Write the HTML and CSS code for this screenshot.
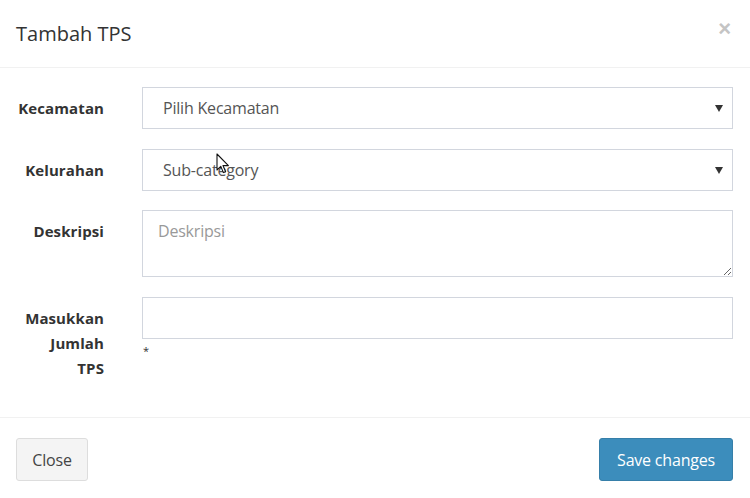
FILE: index.html
```html
<!DOCTYPE html>
<html>
<head>
<meta charset="utf-8">
<link rel="stylesheet" href="styles.css">
</head>
<body>
<div class="modal">
  <div class="modal-header">
    <h4 class="modal-title">Tambah TPS</h4>
    <button class="close" type="button">×</button>
  </div>
  <div class="modal-body">
    <div class="form-row">
      <label class="form-label">Kecamatan</label>
      <div class="select-wrap">
        <select class="form-control"><option>Pilih Kecamatan</option></select>
        <span class="caret"></span>
      </div>
    </div>
    <div class="form-row tight">
      <label class="form-label">Kelurahan</label>
      <div class="select-wrap">
        <select class="form-control"><option>Sub-category</option></select>
        <span class="caret"></span>
        <svg class="cursor" width="14" height="22" viewBox="0 0 14 22">
          <path d="M1 1 L1 17 L4.8 13.4 L7.4 19.6 L9.6 18.7 L7 12.6 L12.4 12.6 Z" fill="#fff" stroke="#111" stroke-width="1.1" stroke-linejoin="round"/>
        </svg>
      </div>
    </div>
    <div class="form-row">
      <label class="form-label">Deskripsi</label>
      <textarea class="form-control textarea" placeholder="Deskripsi"></textarea>
    </div>
    <div class="form-row last">
      <label class="form-label">Masukkan<br>Jumlah<br>TPS</label>
      <div>
        <input class="form-control" type="text">
        <div class="required">*</div>
      </div>
    </div>
  </div>
  <div class="modal-footer">
    <button class="btn btn-default" type="button">Close</button>
    <button class="btn btn-primary" type="button">Save changes</button>
  </div>
</div>
</body>
</html>
```

FILE: styles.css
```css
* { box-sizing: border-box; }
html, body { margin: 0; padding: 0; background: #fff; }
body {
  font-family: "Open Sans", "Liberation Sans", sans-serif;
  color: #333;
  width: 750px;
  height: 498px;
  overflow: hidden;
}
.modal { width: 750px; }
.modal-header {
  height: 68px;
  padding: 0 17px 0 16px;
  border-bottom: 1px solid #f1f1f1;
  display: flex;
  align-items: center;
  justify-content: space-between;
}
.modal-title {
  margin: 0;
  font-size: 20px;
  font-weight: 400;
  color: #333;
  line-height: 1;
  letter-spacing: 0;
}
.close {
  border: 0;
  background: none;
  padding: 0;
  font-family: "Liberation Sans", sans-serif;
  font-size: 22px;
  font-weight: bold;
  color: #c4c4c4;
  line-height: 1;
  margin-top: -10px;
  margin-right: 2px;
}
.modal-body {
  padding: 19px 17px 0 15px;
  height: 350px;
  border-bottom: 1px solid #f1f1f1;
}
.form-row {
  display: grid;
  grid-template-columns: 89px 1fr;
  column-gap: 38px;
  margin-bottom: 20px;
}
.form-row.tight { margin-bottom: 19px; }
.form-label {
  text-align: right;
  font-weight: 700;
  font-size: 15px;
  line-height: 25px;
  padding-top: 9px;
  color: #333;
  letter-spacing: 0.1px;
  white-space: nowrap;
}
.form-control {
  display: block;
  width: 100%;
  height: 42px;
  border: 1px solid #d2d6de;
  border-radius: 0;
  background: #fff;
  font-family: "Open Sans", "Liberation Sans", sans-serif;
  font-size: 16px;
  color: #555;
  padding: 0 20px;
  margin: 0;
  outline: none;
  letter-spacing: -0.2px;
}
select.form-control {
  appearance: none;
  -webkit-appearance: none;
}
.select-wrap { position: relative; }
.caret {
  position: absolute;
  right: 10px;
  top: 18px;
  width: 0;
  height: 0;
  border-left: 4px solid transparent;
  border-right: 4px solid transparent;
  border-top: 7px solid #333;
}
.cursor {
  position: absolute;
  left: 74px;
  top: 4px;
  pointer-events: none;
}
.textarea {
  height: 67px;
  padding: 9px 15px;
  resize: vertical;
  line-height: 22px;
}
.textarea::placeholder { color: #999; }
.required {
  font-size: 11px;
  line-height: 14px;
  padding-left: 1px;
  margin-top: 5px;
  color: #333;
}
.modal-footer {
  display: flex;
  justify-content: space-between;
  padding: 20px 17px 0 16px;
}
.btn {
  height: 43px;
  border-radius: 3px;
  font-family: "Open Sans", "Liberation Sans", sans-serif;
  font-size: 16px;
  padding: 0 6px;
  cursor: pointer;
  letter-spacing: -0.2px;
}
.btn-default {
  width: 72px;
  background: #f4f4f4;
  border: 1px solid #ddd;
  color: #444;
}
.btn-primary {
  width: 134px;
  background: #3c8dbc;
  border: 1px solid #367fa9;
  color: #fff;
}
```
